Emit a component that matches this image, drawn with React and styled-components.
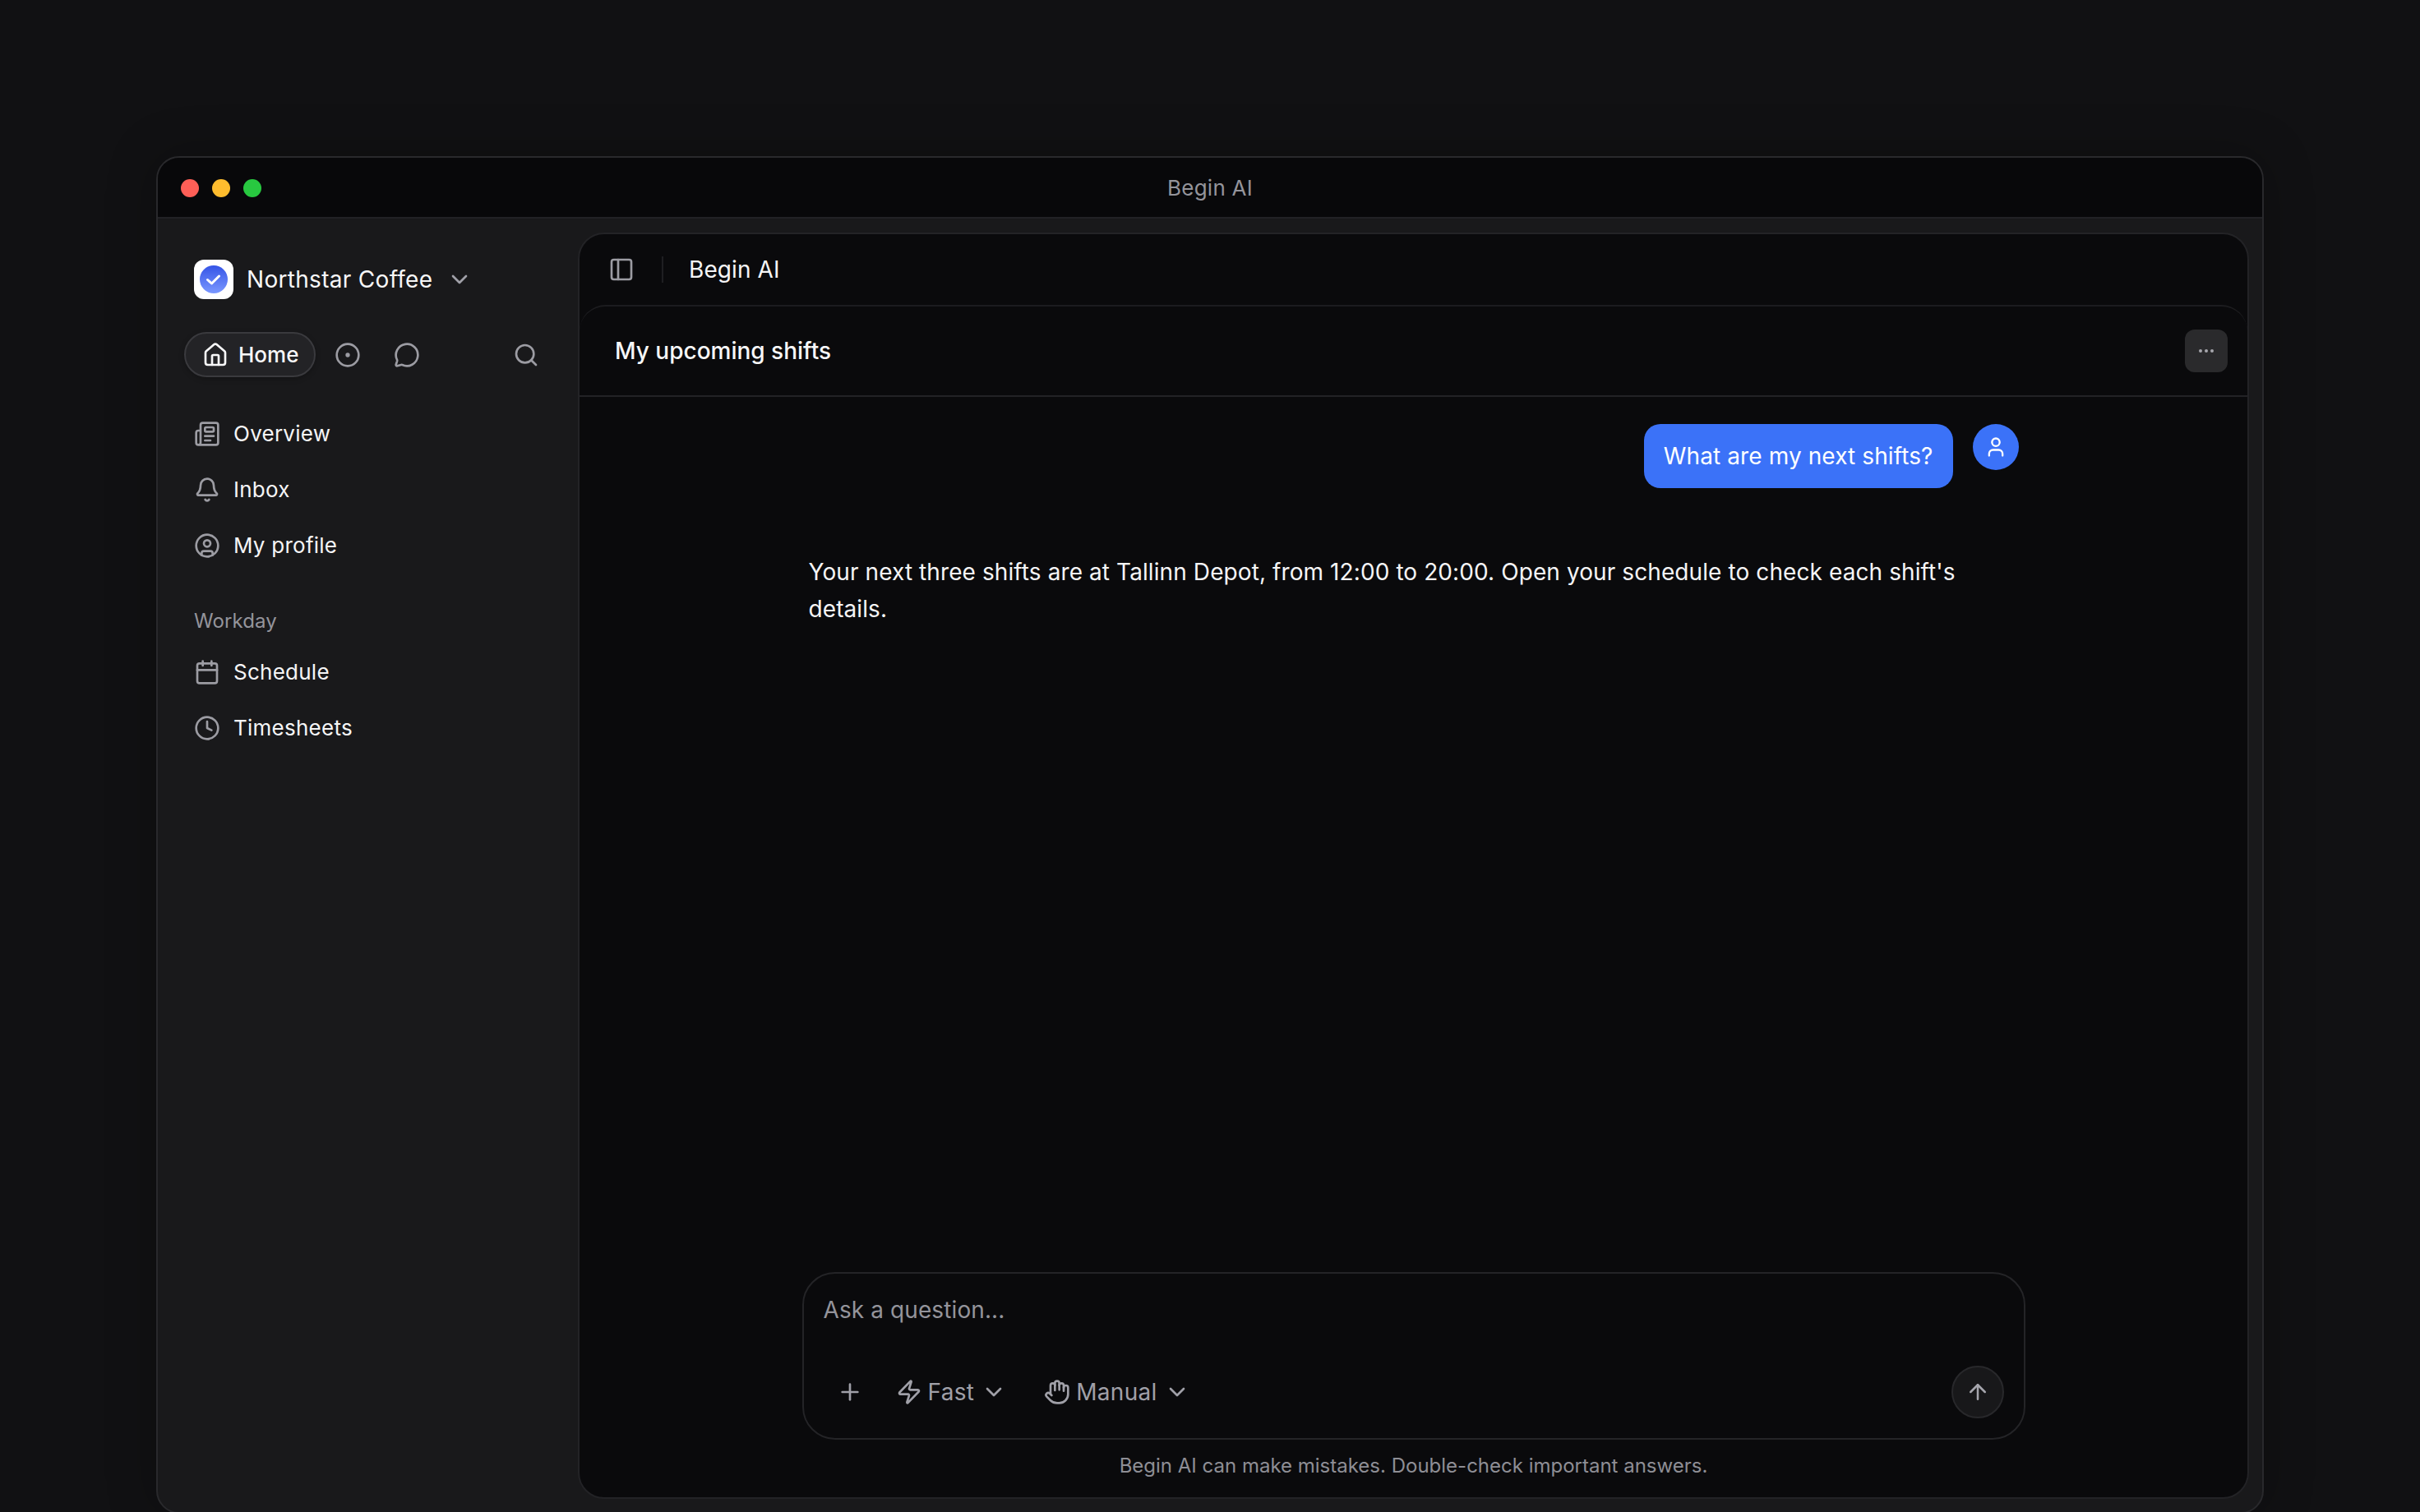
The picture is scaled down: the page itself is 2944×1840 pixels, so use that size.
import React from 'react';
import styled, { createGlobalStyle } from 'styled-components';
import {
  ArrowUp, Bell, Calendar, ChevronDown, CircleDot, CircleUser, Clock, Ellipsis, Hand, House,
  MessageCircle, Newspaper, PanelLeft, Plus, Search, User, Zap,
} from 'lucide-react';

const Global = createGlobalStyle`
  html, body { margin: 0; padding: 0; background: #111113; }
  body { height: 1840px; overflow: hidden; font-family: Inter, "Liberation Sans", sans-serif; -webkit-font-smoothing: antialiased; }
  * { box-sizing: border-box; }
`;

const Page = styled.div`
  height: 1840px;
  padding: 190px 190px 0;
  overflow: hidden;
`;
const Window = styled.div`
  width: 2564px;
  height: 1652px;
  display: flex;
  flex-direction: column;
  background: #19191b;
  border: 2px solid #29292c;
  border-radius: 28px;
  overflow: hidden;
  box-shadow: 0 0 60px rgba(0,0,0,0.25);
`;
const TitleBar = styled.header`
  height: 74px;
  flex: none;
  position: relative;
  display: flex;
  align-items: center;
  justify-content: center;
  background: #08080a;
  border-bottom: 2px solid #222225;
`;
const Lights = styled.div`
  position: absolute;
  left: 28px;
  top: 26px;
  display: flex;
  gap: 16px;
`;
const Light = styled.span`
  width: 22px;
  height: 22px;
  border-radius: 50%;
  background: ${p => p.$c};
`;
const WindowTitle = styled.div`
  font-size: 26px;
  letter-spacing: 0.25px;
  color: #94949b;
  line-height: 36px;
  padding-top: 2px;
`;
const Body = styled.div`
  flex: 1;
  min-height: 0;
  display: flex;
`;
const Sidebar = styled.aside`
  width: 511px;
  flex: none;
  padding: 50px 47px 0 32px;
  display: flex;
  flex-direction: column;
`;
const Brand = styled.div`
  display: flex;
  align-items: center;
  height: 48px;
  margin-left: 12px;
  color: #a0a0a8;
`;
const BrandName = styled.span`
  font-size: 28px;
  font-weight: 400;
  letter-spacing: 0.3px;
  color: #f7f7f8;
  margin-left: 16px;
  margin-right: 17px;
  white-space: nowrap;
`;
const ModeRow = styled.div`
  display: flex;
  align-items: center;
  height: 55px;
  margin-top: 40px;
  color: #9c9ca3;
`;
const Pill = styled.div`
  display: flex;
  align-items: center;
  gap: 12px;
  width: 160px;
  height: 55px;
  padding-left: 20px;
  border-radius: 28px;
  background: #232326;
  border: 2px solid #3a3a3e;
  color: #f7f7f8;
  font-size: 26px;
  font-weight: 500;
  box-shadow: 0 2px 6px rgba(0,0,0,0.25);
`;
const ModeIcon = styled.span`
  display: flex;
  margin-left: ${p => p.$ml}px;
`;
const SearchIcon = styled.span`
  display: flex;
  margin-left: auto;
`;
const NavList = styled.nav`
  display: flex;
  flex-direction: column;
  margin-top: ${p => p.$mt}px;
`;
const NavItem = styled.div`
  display: flex;
  align-items: center;
  gap: 16px;
  height: 68px;
  padding-left: 12px;
  font-size: 26px;
  font-weight: 400;
  letter-spacing: 0.25px;
  color: #f5f5f6;
  svg { color: #9c9ca3; flex: none; }
`;
const NavText = styled.span`
  margin-top: -2px;
`;
const SectionLabel = styled.div`
  margin: 42px 0 0 12px;
  font-size: 24px;
  letter-spacing: 0.1px;
  line-height: 32px;
  font-weight: 400;
  color: #94949b;
`;
const Panel = styled.main`
  flex: 1;
  margin: 17px 16px 16px 0;
  min-width: 0;
  display: flex;
  flex-direction: column;
  background: #0a0a0c;
  border: 2px solid #232326;
  border-radius: 32px;
  overflow: hidden;
`;
const TopBar = styled.div`
  height: 86px;
  flex: none;
  display: flex;
  align-items: center;
  padding-left: 35px;
  color: #9c9ca3;
`;
const Divider = styled.span`
  width: 2px;
  height: 32px;
  margin: 0 31px 0 33px;
  background: #1f1f22;
`;
const TopTitle = styled.span`
  font-size: 28px;
  font-weight: 400;
  letter-spacing: 0.1px;
  color: #f5f5f6;
`;
const Card = styled.section`
  flex: 1;
  min-height: 0;
  display: flex;
  flex-direction: column;
  border-top: 2px solid #1c1c1f;
  border-radius: 32px 32px 0 0;
`;
const ChatHeader = styled.div`
  height: 110px;
  flex: none;
  display: flex;
  align-items: center;
  justify-content: space-between;
  padding: 0 24px 0 43px;
  border-bottom: 2px solid #232326;
`;
const ChatTitle = styled.h1`
  margin: 0;
  font-size: 28px;
  font-weight: 500;
  color: #f7f7f8;
`;
const MoreButton = styled.button`
  width: 52px;
  height: 52px;
  display: flex;
  align-items: center;
  justify-content: center;
  padding: 0;
  border: none;
  border-radius: 12px;
  background: #2a2a2c;
  color: #a6a6ad;
`;
const Thread = styled.div`
  flex: 1;
  min-height: 0;
  width: 1472px;
  margin: 0 auto;
  padding-top: 33px;
  display: flex;
  flex-direction: column;
`;
const UserRow = styled.div`
  display: flex;
  justify-content: flex-end;
  align-items: flex-start;
  gap: 24px;
`;
const Bubble = styled.div`
  height: 78px;
  padding: 0 24px;
  display: flex;
  align-items: center;
  border-radius: 20px;
  background: #3b72f8;
  color: #fff;
  font-size: 28px;
  letter-spacing: 0.1px;
  white-space: nowrap;
`;
const Avatar = styled.div`
  width: 56px;
  height: 56px;
  display: flex;
  align-items: center;
  justify-content: center;
  border-radius: 50%;
  background: #3b72f8;
  color: #fff;
`;
const Answer = styled.p`
  margin: 80px 0 0;
  font-size: 28px;
  letter-spacing: 0.09px;
  line-height: 45px;
  color: #f5f5f6;
`;
const Composer = styled.div`
  width: 1488px;
  height: 204px;
  flex: none;
  margin: 0 auto;
  background: #0a0a0c;
  border: 2px solid #242427;
  border-radius: 40px;
  padding: 24px 24px 23px 24px;
  display: flex;
  flex-direction: column;
`;
const Placeholder = styled.div`
  font-size: 28px;
  line-height: 40px;
  letter-spacing: 0.1px;
  color: #94949b;
`;
const Tools = styled.div`
  margin-top: 48px;
  height: 64px;
  padding-left: 16px;
  display: flex;
  align-items: center;
  color: #a0a0a8;
  font-size: 28px;
  letter-spacing: 0.3px;
  font-weight: 400;
`;
const Tool = styled.div`
  display: flex;
  align-items: center;
  margin-left: ${p => p.$ml}px;
`;
const ToolLabel = styled.span`
  margin: 0 8px 0 7px;
`;
const SendButton = styled.button`
  margin-left: auto;
  width: 64px;
  height: 64px;
  display: flex;
  align-items: center;
  justify-content: center;
  padding: 0;
  border-radius: 50%;
  background: #18181a;
  border: 2px solid #28282b;
  color: #a6a6ad;
`;
const Disclaimer = styled.p`
  margin: 14px 0 20px;
  text-align: center;
  font-size: 24px;
  line-height: 36px;
  color: #8e8e95;
  flex: none;
`;

const Logo = () => (
  <svg width="48" height="48" viewBox="0 0 48 48" style={{ flex: 'none' }}>
    <defs>
      <linearGradient id="lg" x1="0" y1="0" x2="0" y2="1">
        <stop offset="0" stopColor="#3554e6" />
        <stop offset="1" stopColor="#7b98ff" />
      </linearGradient>
    </defs>
    <rect width="48" height="48" rx="12" fill="#fff" />
    <circle cx="24" cy="24" r="17" fill="url(#lg)" />
    <path d="M16.5 24.5l5 4.5 9-9" fill="none" stroke="#fff" strokeWidth="3" strokeLinecap="round" strokeLinejoin="round" />
  </svg>
);

export default function App() {
  return (
    <Page>
      <Global />
      <Window>
        <TitleBar>
          <Lights>
            <Light $c="#ff5f57" />
            <Light $c="#febc2e" />
            <Light $c="#28c840" />
          </Lights>
          <WindowTitle>Begin AI</WindowTitle>
        </TitleBar>
        <Body>
          <Sidebar>
            <Brand>
              <Logo />
              <BrandName>Northstar Coffee</BrandName>
              <ChevronDown size={32} />
            </Brand>
            <ModeRow>
              <Pill><House size={32} />Home</Pill>
              <ModeIcon $ml={23}><CircleDot size={32} /></ModeIcon>
              <ModeIcon $ml={40}><MessageCircle size={32} /></ModeIcon>
              <SearchIcon><Search size={32} /></SearchIcon>
            </ModeRow>
            <NavList $mt={35}>
              <NavItem><Newspaper size={32} /><NavText>Overview</NavText></NavItem>
              <NavItem><Bell size={32} /><NavText>Inbox</NavText></NavItem>
              <NavItem><CircleUser size={32} /><NavText>My profile</NavText></NavItem>
            </NavList>
            <SectionLabel>Workday</SectionLabel>
            <NavList $mt={12}>
              <NavItem><Calendar size={32} /><NavText>Schedule</NavText></NavItem>
              <NavItem><Clock size={32} /><NavText>Timesheets</NavText></NavItem>
            </NavList>
          </Sidebar>
          <Panel>
            <TopBar>
              <PanelLeft size={32} />
              <Divider />
              <TopTitle>Begin AI</TopTitle>
            </TopBar>
            <Card>
              <ChatHeader>
                <ChatTitle>My upcoming shifts</ChatTitle>
                <MoreButton><Ellipsis size={24} /></MoreButton>
              </ChatHeader>
              <Thread>
                <UserRow>
                  <Bubble>What are my next shifts?</Bubble>
                  <Avatar><User size={28} /></Avatar>
                </UserRow>
                <Answer>Your next three shifts are at Tallinn Depot, from 12:00 to 20:00. Open your schedule to check each shift's details.</Answer>
              </Thread>
              <Composer>
                <Placeholder>Ask a question...</Placeholder>
                <Tools>
                  <Plus size={32} />
                  <Tool $ml={40}><Zap size={32} /><ToolLabel>Fast</ToolLabel><ChevronDown size={32} /></Tool>
                  <Tool $ml={45}><Hand size={32} /><ToolLabel>Manual</ToolLabel><ChevronDown size={32} /></Tool>
                  <SendButton><ArrowUp size={30} /></SendButton>
                </Tools>
              </Composer>
              <Disclaimer>Begin AI can make mistakes. Double-check important answers.</Disclaimer>
            </Card>
          </Panel>
        </Body>
      </Window>
    </Page>
  );
}
